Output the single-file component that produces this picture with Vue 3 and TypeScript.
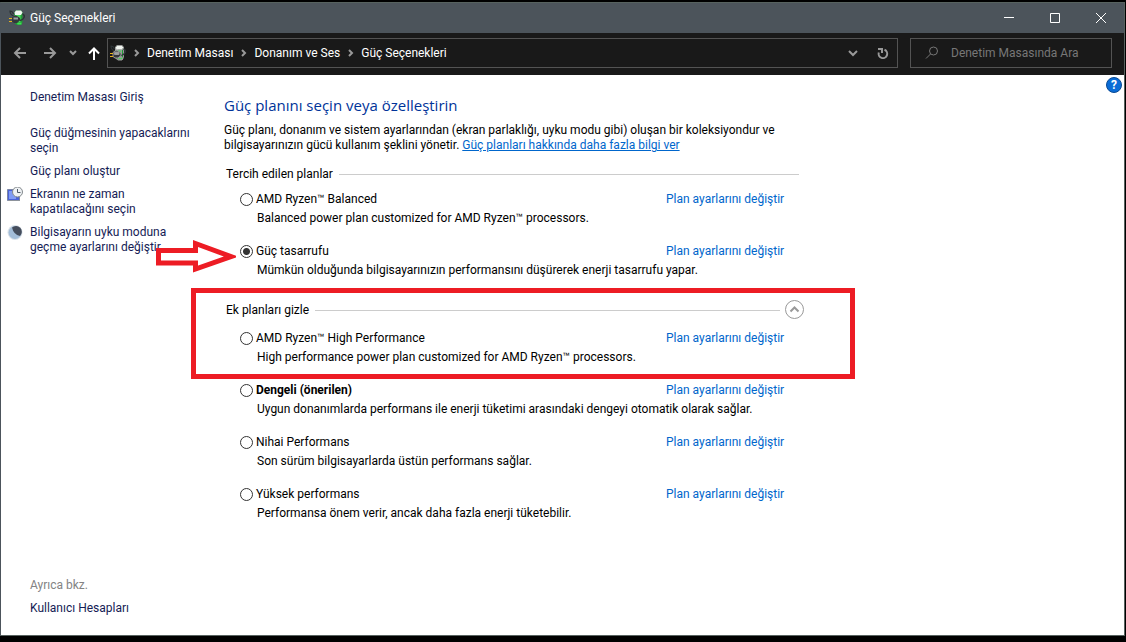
<script setup lang="ts">
import { ref } from 'vue'

interface Plan {
  id: string
  name: string
  description: string
  recommended?: boolean
}

const preferredPlans: Plan[] = [
  { id: 'balanced', name: 'AMD Ryzen™ Balanced', description: 'Balanced power plan customized for AMD Ryzen™ processors.' },
  { id: 'saver', name: 'Güç tasarrufu', description: 'Mümkün olduğunda bilgisayarınızın performansını düşürerek enerji tasarrufu yapar.' },
]

const additionalPlans: Plan[] = [
  { id: 'ryzen-high', name: 'AMD Ryzen™ High Performance', description: 'High performance power plan customized for AMD Ryzen™ processors.' },
  { id: 'dengeli', name: 'Dengeli (önerilen)', description: 'Uygun donanımlarda performans ile enerji tüketimi arasındaki dengeyi otomatik olarak sağlar.', recommended: true },
  { id: 'nihai', name: 'Nihai Performans', description: 'Son sürüm bilgisayarlarda üstün performans sağlar.' },
  { id: 'yuksek', name: 'Yüksek performans', description: 'Performansa önem verir, ancak daha fazla enerji tüketebilir.' },
]

const crumbs = ['Denetim Masası', 'Donanım ve Ses', 'Güç Seçenekleri']
const selected = ref('saver')
const expanded = ref(true)
const query = ref('')
</script>

<template>
  <div class="window">
    <svg class="defs" width="0" height="0" aria-hidden="true">
      <symbol id="power-icon" viewBox="0 0 16 16">
        <path d="M5.500 2.500 7 .5h5L13.500 2.500v10L12 15H8L5.500 13z" fill="#1f9b35" />
        <path d="M5.500 2.500 7 .5h5L13.500 2.500 12 5H6z" fill="#f1f6f1" />
        <path d="M7.500 5h4v7h-4z" fill="#4fd662" />
        <path d="M8 12.500h4.500v2h-4z" fill="#3fe052" />
        <path d="M4.500 6Q1 4.500 1 1q2.500 0 3.500 3" fill="none" stroke="#2c3235" stroke-width="1.200" />
        <path d="M13.500 4q2.500 1 1.500 3.500-1 2.500-4 3" fill="none" stroke="#2f3538" stroke-width="1.500" />
        <path d="M3 7.500 5 6h3l3 2v2.500L8 13H5L3 11.500z" fill="#33383b" />
        <path d="M4.500 7.500h4.500v2h-4.500z" fill="#9ba1a5" />
        <path d="M0 8.500h3M0 11.500h3" stroke="#e8b51c" stroke-width="1" />
      </symbol>
    </svg>

    <header class="titlebar">
      <svg class="icon"><use href="#power-icon" /></svg>
      <span class="title">Güç Seçenekleri</span>
      <button class="caption" aria-label="Simge durumuna küçült">
        <svg viewBox="0 0 12 12"><path d="M1 5.500h10" /></svg>
      </button>
      <button class="caption" aria-label="Ekranı kapla">
        <svg viewBox="0 0 12 12"><path d="M1.500 1.500h9v9h-9z" /></svg>
      </button>
      <button class="caption" aria-label="Kapat">
        <svg viewBox="0 0 12 12"><path d="m1 1 10 10M11 1 1 11" /></svg>
      </button>
    </header>

    <nav class="toolbar">
      <button class="nav" aria-label="Geri"><svg viewBox="0 0 14 14"><path d="M13 7H2M7 2 2 7l5 5" /></svg></button>
      <button class="nav" aria-label="İleri"><svg viewBox="0 0 14 14"><path d="M1 7h11M7 2l5 5-5 5" /></svg></button>
      <button class="nav recent" aria-label="Son konumlar"><svg viewBox="0 0 14 14"><path d="m4 5 3 3 3-3" /></svg></button>
      <button class="nav up" aria-label="Yukarı"><svg viewBox="0 0 14 14"><path d="M7 14V3M2 7.500l5-5 5 5" /></svg></button>
      <div class="address">
        <svg class="icon"><use href="#power-icon" /></svg>
        <template v-for="crumb in crumbs" :key="crumb">
          <svg class="sep" viewBox="0 0 6 8"><path d="m1 1 3 3-3 3" /></svg>
          <a href="#" class="crumb">{{ crumb }}</a>
        </template>
        <button class="tool first" aria-label="Önceki konumlar"><svg viewBox="0 0 14 14"><path d="m4 5 4 4 4-4" /></svg></button>
        <button class="tool" aria-label="Yenile"><svg viewBox="0 0 14 14"><path d="M9.500 3.800a4.300 4.300 0 1 1-5.700 2.700M3 3h4v4" /></svg></button>
      </div>
      <label class="search">
        <svg viewBox="0 0 14 14"><circle cx="8.500" cy="5" r="4" /><path d="M5.500 8 1 12.500" /></svg>
        <input v-model="query" type="text" placeholder="Denetim Masasında Ara" aria-label="Denetim Masasında Ara">
      </label>
    </nav>

    <div class="content">
      <aside class="sidebar">
        <a href="#" class="home">Denetim Masası Giriş</a>
        <a href="#">Güç düğmesinin yapacaklarını seçin</a>
        <a href="#">Güç planı oluştur</a>
        <a href="#" class="with-icon">
          <svg class="icon" viewBox="0 0 16 16">
            <path d="M.5 2.500h12v11H.5z" fill="#4a62d8" stroke="#7b86a5" />
            <path d="M2 4h7v8H2z" fill="#7f9bf4" />
            <path d="M1 13.500h12" stroke="#8d939b" />
            <circle cx="10.500" cy="5" r="5" fill="#eef1f3" stroke="#83898d" />
            <path d="M10.500 2v3.500h3" fill="none" stroke="#4c5966" />
          </svg>
          <span>Ekranın ne zaman kapatılacağını seçin</span>
        </a>
        <a href="#" class="with-icon">
          <svg class="icon" viewBox="0 0 16 16">
            <circle cx="8" cy="7.500" r="7.500" fill="#dbe3ea" />
            <circle cx="8" cy="7.500" r="6.500" fill="#a3bdd8" />
            <path d="M5 2.500a5.500 5.500 0 1 1 8 8.500Q6.500 9.500 5 2.500z" fill="#454d5c" />
          </svg>
          <span>Bilgisayarın uyku moduna geçme ayarlarını değiştir</span>
        </a>
        <div class="see-also">Ayrıca bkz.</div>
        <a href="#" class="last">Kullanıcı Hesapları</a>
      </aside>

      <main class="main">
        <h1>Güç planını seçin veya özelleştirin</h1>
        <p class="intro">
          Güç planı, donanım ve sistem ayarlarından (ekran parlaklığı, uyku modu gibi) oluşan bir koleksiyondur ve
          bilgisayarınızın gücü kullanım şeklini yönetir. <a href="#">Güç planları hakkında daha fazla bilgi ver</a>
        </p>

        <section class="group">
          <h2>Tercih edilen planlar</h2>
          <div v-for="plan in preferredPlans" :key="plan.id" class="plan">
            <input :id="plan.id" v-model="selected" type="radio" name="plan" :value="plan.id">
            <label :for="plan.id">{{ plan.name }}</label>
            <a href="#">Plan ayarlarını değiştir</a>
            <p>{{ plan.description }}</p>
            <svg v-if="plan.id === 'saver'" class="arrow" viewBox="0 0 80 34" aria-hidden="true">
              <path d="M2.500 11.500h37v-7L75 17.500 39.500 30v-6h-37z" />
            </svg>
          </div>
        </section>

        <section class="group additional">
          <h2>
            <span>Ek planları gizle</span>
            <button class="toggle" aria-label="Ek planları gizle" :aria-expanded="expanded" @click="expanded = !expanded">
              <svg viewBox="0 0 20 20"><circle cx="10.500" cy="9.500" r="9" /><path d="m6.500 11.500 4-4 4 4" stroke-width="2" /></svg>
            </button>
          </h2>
          <template v-if="expanded">
            <div v-for="plan in additionalPlans" :key="plan.id" class="plan">
              <input :id="plan.id" v-model="selected" type="radio" name="plan" :value="plan.id">
              <label :for="plan.id" :class="{ strong: plan.recommended }">{{ plan.name }}</label>
              <a href="#">Plan ayarlarını değiştir</a>
              <p>{{ plan.description }}</p>
            </div>
          </template>
          <div class="highlight" aria-hidden="true"></div>
        </section>
      </main>

      <button class="help" aria-label="Yardım">?</button>
    </div>
  </div>
</template>

<style>
body {
  background: #000;
}
#app {
  display: flex;
  flex-direction: column;
  box-sizing: border-box;
  min-height: 100vh;
  padding: 2px 1px 6px 0;
}
</style>

<style scoped>
.window {
  flex: 1;
  display: flex;
  flex-direction: column;
  border: 1px solid #57625f;
  border-left-color: #4c545b;
  background: #fff;
  color: #000;
  font: 12px/15px Roboto, "Noto Sans", sans-serif;
}
.defs {
  position: absolute;
}
a {
  color: #0066cc;
  text-decoration: none;
}
button {
  display: flex;
  align-items: center;
  justify-content: center;
  padding: 0;
  border: 0;
  background: none;
  font: inherit;
}
.icon {
  flex: none;
  width: 16px;
  height: 16px;
}
.titlebar {
  display: flex;
  align-items: center;
  height: 30px;
  padding-left: 8px;
  background: #4c545b;
  color: #fff;
}
.title {
  flex: 1;
  margin-left: 5px;
}
.caption {
  width: 46px;
  height: 30px;
}
.caption svg {
  width: 12px;
  height: 12px;
  fill: none;
  stroke: #fff;
}
.toolbar {
  display: flex;
  align-items: center;
  box-sizing: border-box;
  height: 42px;
  padding: 0 12px 2px 4px;
  background: #191919;
}
.toolbar svg {
  fill: none;
  stroke: #999;
}
.nav {
  width: 30px;
  height: 30px;
}
.nav svg {
  width: 14px;
  height: 14px;
  stroke-width: 2;
}
.nav.recent {
  width: 16px;
}
.nav.up {
  width: 26px;
}
.nav.up svg {
  stroke: #fff;
}
.address {
  flex: 1;
  display: flex;
  align-items: center;
  box-sizing: border-box;
  height: 30px;
  padding-left: 2px;
  border: 1px solid #535353;
}
.address .sep {
  width: 6px;
  height: 8px;
  margin: 0 7px 0 8px;
  stroke-width: 2;
}
.crumb {
  color: #fff;
  white-space: nowrap;
}
.tool {
  width: 30px;
  height: 28px;
}
.tool.first {
  margin-left: auto;
}
.tool svg {
  width: 14px;
  height: 14px;
  stroke-width: 2;
}
.search {
  display: flex;
  align-items: center;
  box-sizing: border-box;
  width: 202px;
  height: 30px;
  margin-left: 12px;
  padding-left: 14px;
  border: 1px solid #535353;
}
.search svg {
  flex: none;
  width: 14px;
  height: 14px;
  stroke: #777;
}
.search input {
  flex: 1;
  min-width: 0;
  margin-left: 12px;
  padding: 0;
  border: 0;
  outline: 0;
  background: none;
  color: #fff;
  font: inherit;
}
.search input::placeholder {
  color: #777;
  opacity: 1;
}
.content {
  flex: 1;
  display: flex;
  position: relative;
}
.sidebar {
  flex: none;
  display: flex;
  flex-direction: column;
  gap: 8px;
  box-sizing: border-box;
  width: 223px;
  padding: 15px 25px 19px 29px;
}
.sidebar a {
  color: #151c55;
}
.sidebar .home {
  margin-bottom: 13px;
}
.with-icon {
  display: flex;
  gap: 7px;
  margin-left: -23px;
}
.see-also {
  margin-top: auto;
  color: #838383;
}
.main {
  flex: 1;
  max-width: 580px;
  padding-top: 18px;
}
h1,
h2,
p {
  margin: 0;
  font-weight: 400;
}
h1 {
  color: #003399;
  font-family: "Open Sans", "Noto Sans", sans-serif;
  font-size: 15px;
  line-height: 24px;
}
.intro {
  margin: 6px 20px 11px 0;
}
.intro a {
  text-decoration: underline;
}
.group {
  position: relative;
}
h2 {
  display: flex;
  align-items: center;
  height: 20px;
  margin: 0 5px 6px 2px;
  font-size: 12px;
}
h2::after {
  content: "";
  flex: 1;
  order: 1;
  height: 1px;
  margin-left: 6px;
  background: #ccc;
}
.additional h2 {
  margin: 20px 0 9px 2px;
}
.toggle {
  order: 2;
  margin-left: 4px;
}
.toggle svg {
  width: 20px;
  height: 20px;
  fill: none;
  stroke: #999;
}
.plan {
  display: grid;
  grid-template-columns: 16px 1fr 138px;
  align-items: center;
  position: relative;
  margin: 0 0 14px 16px;
}
.plan input {
  appearance: none;
  width: 13px;
  height: 13px;
  margin: 0;
  border: 1px solid #333;
  border-radius: 50%;
  background: #fff;
}
.plan input:checked {
  background: radial-gradient(circle, #333 0 3px, #fff 4px);
}
.plan label,
.plan > a {
  line-height: 18px;
  white-space: nowrap;
}
.plan .strong {
  font-weight: 700;
}
.plan p {
  grid-column: 2 / 4;
  padding-left: 1px;
  line-height: 20px;
}
.arrow {
  position: absolute;
  top: -3px;
  left: -84px;
  width: 80px;
  height: 34px;
  fill: #fff;
  stroke: #ed1c24;
  stroke-width: 5;
}
.highlight {
  position: absolute;
  top: -12px;
  left: -33px;
  right: -51px;
  box-sizing: border-box;
  height: 91px;
  border: 5px solid #ed1c24;
  pointer-events: none;
}
.help {
  position: absolute;
  top: 2px;
  right: 2px;
  width: 16px;
  height: 16px;
  border: 1px solid #0a4a94;
  border-radius: 50%;
  background: #0a6cd6;
  color: #fff;
  font-weight: 700;
}
</style>
